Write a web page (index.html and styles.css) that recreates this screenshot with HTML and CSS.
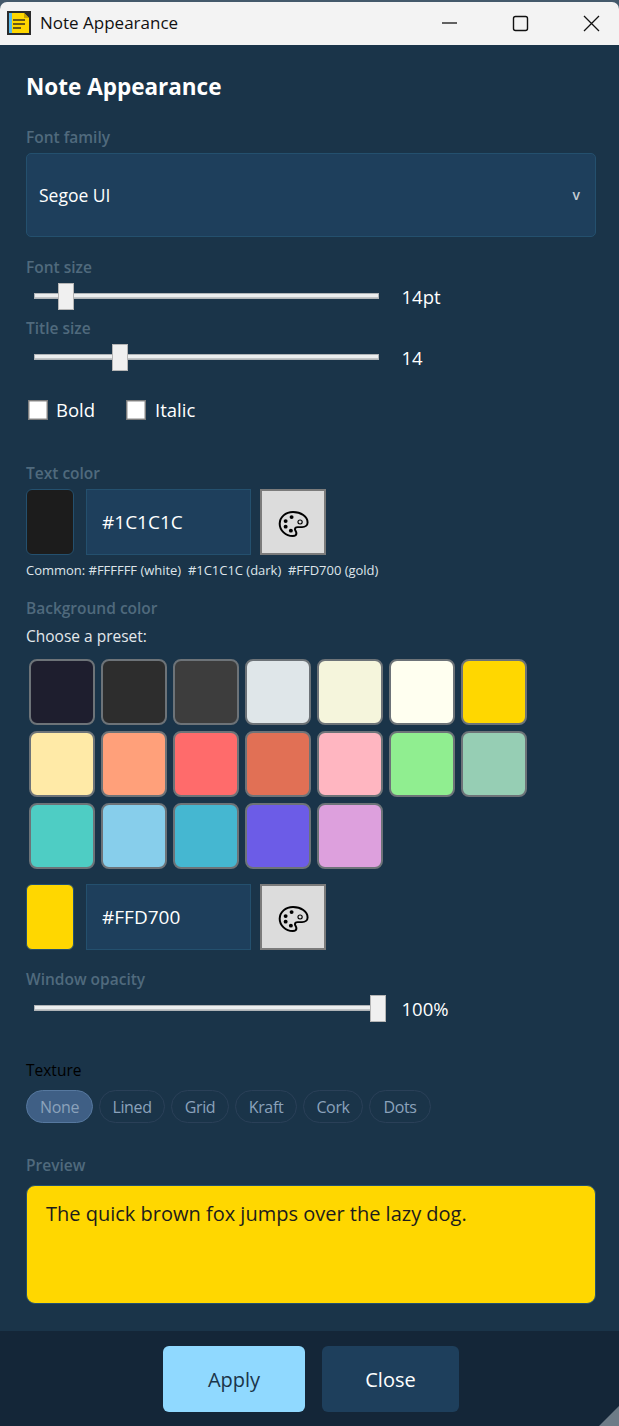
FILE: index.html
```html
<!DOCTYPE html>
<html lang="en">
<head>
<meta charset="utf-8">
<title>Note Appearance</title>
<link rel="stylesheet" href="styles.css">
</head>
<body>
<div class="window">
  <header class="titlebar">
    <svg class="app-icon" viewBox="0 0 24 24" width="24" height="24"><rect width="24" height="24" fill="#2b2b2b"/><path d="M2 2H17L22 7V22H2Z" fill="#ffd700"/><rect x="2" y="2" width="3" height="20" fill="#59b8e8"/><path d="M17 2L22 7H17Z" fill="#c9a400"/><path d="M6 9H18M6 13H18M6 17H14" stroke="#3a3220" stroke-width="1.6"/></svg>
    <span class="titlebar-text">Note Appearance</span>
    <div class="win-controls">
      <svg class="win-btn" viewBox="0 0 71 30" width="71" height="30"><path d="M28 15H43" stroke="#111" stroke-width="1.3"/></svg>
      <svg class="win-btn" viewBox="0 0 71 30" width="71" height="30"><rect x="28.500" y="8.500" width="14" height="14" rx="2" fill="none" stroke="#111" stroke-width="1.4"/></svg>
      <svg class="win-btn" viewBox="0 0 71 30" width="71" height="30"><path d="M28 8L43 23M43 8L28 23" stroke="#111" stroke-width="1.3"/></svg>
    </div>
  </header>

  <main class="content">
    <h1 class="heading">Note Appearance</h1>

    <div class="label">Font family</div>
    <div class="select"><span>Segoe UI</span><span class="chevron">v</span></div>

    <div class="label label-font-size">Font size</div>
    <div class="slider-row slider-row-first">
      <div class="slider"><div class="track"></div><div class="thumb" style="left:24px"></div></div>
      <span class="slider-value">14pt</span>
    </div>
    <div class="label label-title-size">Title size</div>
    <div class="slider-row slider-row-second">
      <div class="slider"><div class="track"></div><div class="thumb" style="left:78px"></div></div>
      <span class="slider-value">14</span>
    </div>

    <div class="checks">
      <label class="check"><span class="box"></span>Bold</label>
      <label class="check"><span class="box"></span>Italic</label>
    </div>

    <div class="label label-text-color">Text color</div>
    <div class="color-row">
      <div class="swatch-big swatch-dark"></div>
      <div class="hex">#1C1C1C</div>
      <div class="pick">
        <svg class="palette" viewBox="0 0 24 24" width="34" height="32" preserveAspectRatio="none"><path d="M12 3C6.8 3 2.6 6.8 2.6 11.8c0 5 4.2 9.2 9.2 9.2 1.8 0 2.6-1 2.6-2.1 0-1.4-1-1.9-1-3 0-1 .8-1.6 1.900-1.600h3.100c2.200 0 3.900-1.300 3.900-3.500C22.300 6.300 17.600 3 12 3Z" fill="none" stroke="#000" stroke-width="1.400"/><circle cx="11" cy="6.800" r="1.400"/><circle cx="6.800" cy="9.800" r="1.400"/><circle cx="6.800" cy="14" r="1.400"/><circle cx="10.500" cy="17" r="1.400"/><circle cx="17" cy="10.500" r="1.500" fill="none" stroke="#000" stroke-width=".8"/></svg>
      </div>
    </div>
    <div class="common">Common: #FFFFFF (white)&nbsp; #1C1C1C (dark)&nbsp; #FFD700 (gold)</div>

    <div class="label label-bg">Background color</div>
    <div class="preset-label">Choose a preset:</div>
    <div class="presets">
      <div class="preset p1"></div><div class="preset p2"></div><div class="preset p3"></div><div class="preset p4"></div><div class="preset p5"></div><div class="preset p6"></div><div class="preset p7"></div>
      <div class="preset p8"></div><div class="preset p9"></div><div class="preset p10"></div><div class="preset p11"></div><div class="preset p12"></div><div class="preset p13"></div><div class="preset p14"></div>
      <div class="preset p15"></div><div class="preset p16"></div><div class="preset p17"></div><div class="preset p18"></div><div class="preset p19"></div>
    </div>
    <div class="color-row color-row-bg">
      <div class="swatch-big swatch-gold"></div>
      <div class="hex">#FFD700</div>
      <div class="pick">
        <svg class="palette" viewBox="0 0 24 24" width="34" height="32" preserveAspectRatio="none"><path d="M12 3C6.8 3 2.6 6.8 2.6 11.8c0 5 4.2 9.2 9.2 9.2 1.8 0 2.6-1 2.6-2.1 0-1.4-1-1.9-1-3 0-1 .8-1.6 1.900-1.600h3.100c2.200 0 3.900-1.300 3.900-3.500C22.300 6.300 17.600 3 12 3Z" fill="none" stroke="#000" stroke-width="1.400"/><circle cx="11" cy="6.800" r="1.400"/><circle cx="6.800" cy="9.800" r="1.400"/><circle cx="6.800" cy="14" r="1.400"/><circle cx="10.500" cy="17" r="1.400"/><circle cx="17" cy="10.500" r="1.500" fill="none" stroke="#000" stroke-width=".8"/></svg>
      </div>
    </div>

    <div class="label label-opacity">Window opacity</div>
    <div class="slider-row slider-row-opacity">
      <div class="slider"><div class="track"></div><div class="thumb" style="left:336px"></div></div>
      <span class="slider-value">100%</span>
    </div>

    <div class="texture-label">Texture</div>
    <div class="pills">
      <span class="pill pill-active w-none">None</span>
      <span class="pill w-lined">Lined</span>
      <span class="pill w-grid">Grid</span>
      <span class="pill w-kraft">Kraft</span>
      <span class="pill w-cork">Cork</span>
      <span class="pill w-dots">Dots</span>
    </div>

    <div class="label label-preview">Preview</div>
    <div class="preview">The quick brown fox jumps over the lazy dog.</div>
  </main>

  <footer class="footer">
    <button class="btn btn-apply">Apply</button>
    <button class="btn btn-close">Close</button>
    <div class="grip"></div>
  </footer>
</div>
</body>
</html>
```
FILE: styles.css
```css
* { box-sizing: border-box; }
html, body { margin: 0; padding: 0; }
body {
  width: 619px;
  height: 1426px;
  overflow: hidden;
  background: #44596b;
  font-family: "Open Sans", "Noto Sans", sans-serif;
  color: #fff;
}
.window { padding-top: 2px; height: 1426px; display: flex; flex-direction: column; }
.titlebar {
  height: 43px;
  flex: none;
  background: #f3f3f3;
  border-radius: 7px 7px 0 0;
  display: flex;
  align-items: center;
  padding-left: 7px;
  color: #111;
}
.app-icon { flex: none; margin-top: -2px; }
.titlebar-text { margin: 0 0 2px 9px; font-size: 17px; line-height: 22px; }
.win-controls { margin-left: auto; margin-right: -8px; display: flex; }
.win-btn { display: block; margin-top: -2px; }

.content { flex: 1; background: #1a3449; padding: 0 23px 0 26px; }
.heading { margin: 27px 0 0; font-size: 22.500px; line-height: 30px; font-weight: 700; }
.label { font-size: 15.500px; line-height: 20px; color: #506a7d; font-weight: 600; }
.heading + .label { margin-top: 25px; }
.select {
  margin-top: 6px;
  height: 84px;
  background: #1e3f5c;
  border: 1px solid #24506e;
  border-radius: 5px;
  display: flex;
  align-items: center;
  justify-content: space-between;
  padding: 0 15px 0 12px;
  font-size: 17.500px;
}
.chevron { font-size: 14px; color: #c4ccd3; font-weight: 600; margin-bottom: 2px; }
.label-font-size { margin-top: 20px; }
.label-title-size { margin-top: 7px; }
.slider-row { display: flex; align-items: center; height: 28px; padding-left: 8px; }
.slider-row-first { margin-top: 6px; }
.slider-row-second { margin-top: 6px; }
.slider { position: relative; width: 345px; height: 28px; flex: none; }
.track {
  position: absolute; left: 0; right: 0; top: 10px; height: 6px;
  background: #eceeef;
  border: 1px solid #b0b4b7;
  box-shadow: inset 0 -1px 0 #c2c5c7;
}
.thumb {
  position: absolute; top: 0; width: 16px; height: 27px;
  background: #f0f0f0;
  border: 1px solid #b5b5b5;
}
.slider-value { margin-left: 22.500px; font-size: 18.500px; line-height: 24px; }
.checks { display: flex; margin-top: 27px; height: 22px; padding-left: 2px; }
.check { display: flex; align-items: center; font-size: 18.500px; line-height: 22px; }
.check + .check { margin-left: 31px; }
.box { width: 20px; height: 20px; background: #fff; border: 1px solid #7d7d7d; margin-right: 8px; flex: none; box-shadow: inset 0 0 0 .5px #8a8a8a; }
.check + .check .box { margin-right: 9px; }
.label-text-color { margin-top: 42px; }
.color-row { display: flex; margin-top: 6px; height: 66px; }
.swatch-big { width: 48px; border-radius: 6px; border: 1px solid #24506e; margin-right: 12px; flex: none; }
.swatch-dark { background: #1c1c1c; }
.swatch-gold { background: #ffd700; }
.hex {
  width: 165px; background: #1e3f5c; border: 1px solid #24506e;
  display: flex; align-items: center; padding-left: 15px;
  font-size: 19px; flex: none;
}
.pick {
  width: 66px; margin-left: 9px; background: #dcdcdc; border: 2px solid #7b7b7b;
  display: flex; align-items: center; justify-content: center; flex: none;
}
.palette { margin-top: 3px; }
.common { margin-top: 6px; font-size: 13px; line-height: 18px; color: #dfe5ea; height: 18px; white-space: nowrap; letter-spacing: -.02px; }
.label-bg { margin-top: 19px; }
.preset-label { margin-top: 8px; font-size: 15.500px; line-height: 20px; color: #e3e8ec; }
.presets { display: grid; grid-template-columns: repeat(7, 66px); grid-auto-rows: 66px; gap: 6px; margin: 12.500px 0 0 3px; }
.preset { border-radius: 8px; border: 2px solid #6d7378; }
.p1 { background: #1e1e2e; } .p2 { background: #2d2d2d; } .p3 { background: #3d3d3d; }
.p4 { background: #dfe6e9; } .p5 { background: #f5f5dc; } .p6 { background: #fffff0; }
.p7 { background: #ffd700; } .p8 { background: #ffeaa7; } .p9 { background: #ffa07a; }
.p10 { background: #ff6b6b; } .p11 { background: #e17055; } .p12 { background: #ffb6c1; }
.p13 { background: #90ee90; } .p14 { background: #96ceb4; } .p15 { background: #4ecdc4; }
.p16 { background: #87ceeb; } .p17 { background: #45b7d1; } .p18 { background: #6c5ce7; }
.p19 { background: #dda0dd; }
.color-row-bg { margin-top: 15.500px; }
.label-opacity { margin-top: 19px; }
.slider-row-opacity { margin-top: 6px; }
.texture-label { margin-top: 37px; font-size: 15.500px; line-height: 20px; color: #000; }
.pills { display: flex; gap: 6px; margin-top: 10px; }
.pill {
  height: 33px; border-radius: 17px; border: 1px solid #2a4058;
  display: flex; align-items: center; justify-content: center;
  font-size: 16px; letter-spacing: -.35px; color: #8ba2bb;
}
.w-none { width: 67px; } .w-lined { width: 66px; } .w-grid { width: 58px; }
.w-kraft { width: 62px; } .w-cork { width: 60px; } .w-dots { width: 62px; }
.pill-active { background: #3f5f85; border-color: #56789f; color: #8ba2bb; }
.label-preview { margin-top: 32px; }
.preview {
  margin-top: 10px; height: 119px; background: #ffd700; border: 1px solid #24506e;
  border-radius: 9px; padding: 15px 19px; font-size: 20px; line-height: 26px; color: #1c1c1c;
}
.footer {
  position: relative; flex: none; height: 95px; background: #142638;
  display: flex; justify-content: flex-start; padding: 15px 0 0 163px; gap: 17px;
}
.btn { height: 66px; border: 0; border-radius: 6px; font-family: inherit; font-size: 20px; font-weight: 500; }
.btn-apply { width: 142px; background: #90d9ff; color: #1a3449; }
.btn-close { width: 137px; background: #1e3f5c; color: #fff; }
.grip { position: absolute; right: 0; bottom: 0; width: 20px; height: 20px; background: #6d7b87; clip-path: polygon(100% 0, 100% 100%, 0 100%); }
```
